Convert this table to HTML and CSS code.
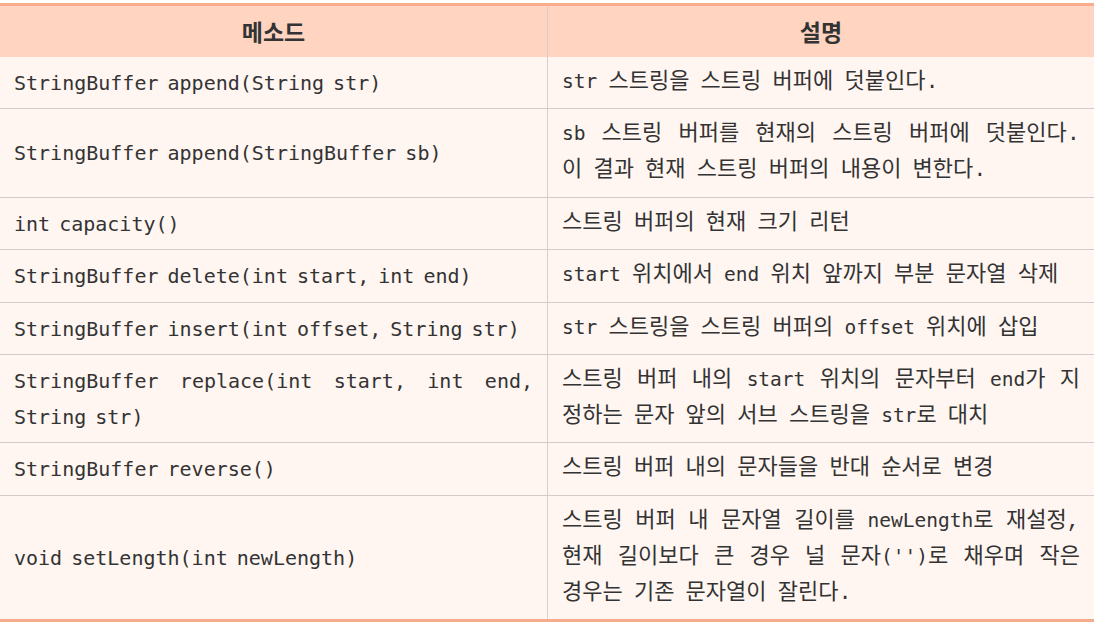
FILE: index.html
```html
<!DOCTYPE html>
<html lang="ko">
<head>
<meta charset="utf-8">
<link rel="stylesheet" href="styles.css">
</head>
<body>
<table class="method-table">
  <colgroup>
    <col class="col-method">
    <col class="col-desc">
  </colgroup>
  <thead>
    <tr>
      <th>메소드</th>
      <th>설명</th>
    </tr>
  </thead>
  <tbody>
    <tr>
      <td class="sig">StringBuffer append(String str)</td>
      <td class="desc"><code>str</code> 스트링을 스트링 버퍼에 덧붙인다.</td>
    </tr>
    <tr>
      <td class="sig">StringBuffer append(StringBuffer sb)</td>
      <td class="desc">
        <span class="ln"><code>sb</code> 스트링 버퍼를 현재의 스트링 버퍼에 덧붙인다.</span>
        <span class="ln">이 결과 현재 스트링 버퍼의 내용이 변한다.</span>
      </td>
    </tr>
    <tr>
      <td class="sig">int capacity()</td>
      <td class="desc">스트링 버퍼의 현재 크기 리턴</td>
    </tr>
    <tr>
      <td class="sig">StringBuffer delete(int start, int end)</td>
      <td class="desc"><code>start</code> 위치에서 <code>end</code> 위치 앞까지 부분 문자열 삭제</td>
    </tr>
    <tr>
      <td class="sig">StringBuffer insert(int offset, String str)</td>
      <td class="desc"><code>str</code> 스트링을 스트링 버퍼의 <code>offset</code> 위치에 삽입</td>
    </tr>
    <tr>
      <td class="sig">
        <span class="ln">StringBuffer replace(int start, int end,</span>
        <span class="ln">String str)</span>
      </td>
      <td class="desc">
        <span class="ln">스트링 버퍼 내의 <code>start</code> 위치의 문자부터 <code>end</code>가 지</span>
        <span class="ln">정하는 문자 앞의 서브 스트링을 <code>str</code>로 대치</span>
      </td>
    </tr>
    <tr>
      <td class="sig">StringBuffer reverse()</td>
      <td class="desc">스트링 버퍼 내의 문자들을 반대 순서로 변경</td>
    </tr>
    <tr>
      <td class="sig">void setLength(int newLength)</td>
      <td class="desc">
        <span class="ln">스트링 버퍼 내 문자열 길이를 <code>newLength</code>로 재설정,</span>
        <span class="ln">현재 길이보다 큰 경우 널 문자<code>('')</code>로 채우며 작은</span>
        <span class="ln">경우는 기존 문자열이 잘린다.</span>
      </td>
    </tr>
  </tbody>
</table>
</body>
</html>
```
FILE: styles.css
```css
html, body {
  margin: 0;
  padding: 0;
  background: #ffffff;
}

body {
  padding-top: 3px;
  font-family: "DejaVu Sans Mono", "Noto Sans CJK KR", monospace;
  font-size: 20px;
  color: #333333;
}

.method-table {
  width: 1094px;
  table-layout: fixed;
  border-collapse: separate;
  border-spacing: 0;
  background: #fff6f2;
  border-top: 3px solid #f9ab8e;
  border-bottom: 3px solid #f9ab8e;
}

.col-method {
  width: 547px;
}

.method-table th {
  background: #ffd5c1;
  font-family: "Noto Sans CJK KR", sans-serif;
  font-size: 23px;
  font-weight: 700;
  text-align: center;
  line-height: 36px;
  height: 51px;
  box-sizing: border-box;
  padding: 7px 14px 8px;
  color: #333333;
}

.method-table th + th,
.method-table td + td {
  border-left: 1px solid #d6d0cd;
}

.method-table td {
  line-height: 36px;
  padding: 8px 14px 7.4px;
  text-align: left;
  vertical-align: middle;
  border-bottom: 1px solid #d0cccb;
}

.method-table tbody tr:last-child td {
  border-bottom: none;
}

.sig {
  font-size: 20px;
  word-spacing: -3px;
}

.desc {
  font-family: "Liberation Mono", "Noto Sans CJK KR", monospace;
  font-size: 22px;
  word-spacing: -2px;
}

.desc code {
  font-family: "DejaVu Sans Mono", monospace;
  font-size: 19.5px;
  line-height: 1;
}

.ln {
  display: block;
  white-space: nowrap;
  text-align: justify;
  text-align-last: justify;
}

.ln:last-child {
  text-align-last: left;
}
```
